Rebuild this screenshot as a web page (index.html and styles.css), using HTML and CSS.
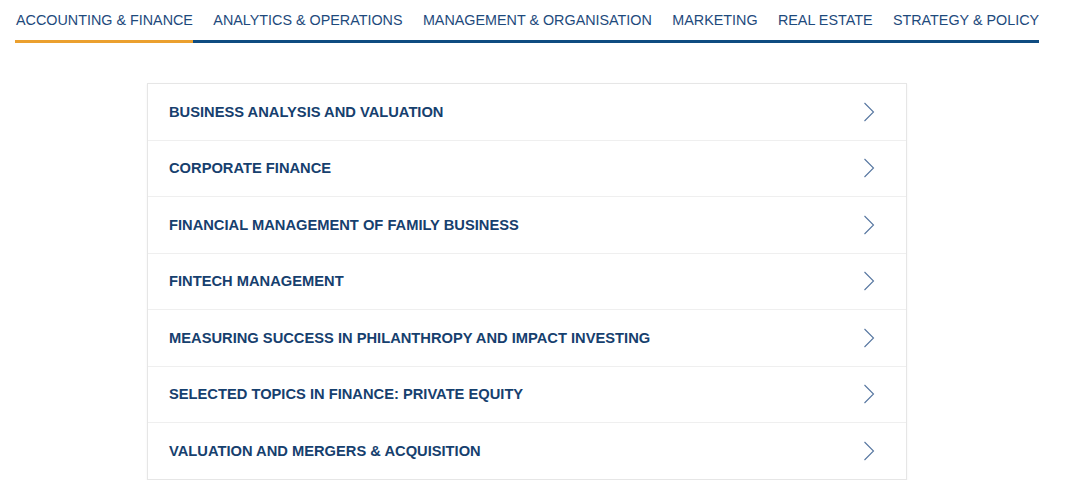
FILE: index.html
```html
<!DOCTYPE html>
<html lang="en">
<head>
<meta charset="utf-8">
<title>Courses</title>
<link rel="stylesheet" href="styles.css">
</head>
<body>
<div class="wrap">
  <nav class="tabs">
    <a class="tab active" href="#">ACCOUNTING &amp; FINANCE</a>
    <a class="tab" href="#">ANALYTICS &amp; OPERATIONS</a>
    <a class="tab" href="#">MANAGEMENT &amp; ORGANISATION</a>
    <a class="tab" href="#">MARKETING</a>
    <a class="tab" href="#">REAL ESTATE</a>
    <a class="tab" href="#">STRATEGY &amp; POLICY</a>
  </nav>
  <ul class="list">
    <li class="row"><span>BUSINESS ANALYSIS AND VALUATION</span><svg class="chev" viewBox="0 0 12 20" width="12" height="20"><polyline points="1.5,1 10.5,10 1.5,19"/></svg></li>
    <li class="row"><span>CORPORATE FINANCE</span><svg class="chev" viewBox="0 0 12 20" width="12" height="20"><polyline points="1.5,1 10.5,10 1.5,19"/></svg></li>
    <li class="row"><span>FINANCIAL MANAGEMENT OF FAMILY BUSINESS</span><svg class="chev" viewBox="0 0 12 20" width="12" height="20"><polyline points="1.5,1 10.5,10 1.5,19"/></svg></li>
    <li class="row"><span>FINTECH MANAGEMENT</span><svg class="chev" viewBox="0 0 12 20" width="12" height="20"><polyline points="1.5,1 10.5,10 1.5,19"/></svg></li>
    <li class="row"><span>MEASURING SUCCESS IN PHILANTHROPY AND IMPACT INVESTING</span><svg class="chev" viewBox="0 0 12 20" width="12" height="20"><polyline points="1.5,1 10.5,10 1.5,19"/></svg></li>
    <li class="row"><span>SELECTED TOPICS IN FINANCE: PRIVATE EQUITY</span><svg class="chev" viewBox="0 0 12 20" width="12" height="20"><polyline points="1.5,1 10.5,10 1.5,19"/></svg></li>
    <li class="row"><span>VALUATION AND MERGERS &amp; ACQUISITION</span><svg class="chev" viewBox="0 0 12 20" width="12" height="20"><polyline points="1.5,1 10.5,10 1.5,19"/></svg></li>
  </ul>
</div>
</body>
</html>
```
FILE: styles.css
```css
* { box-sizing: border-box; }
html, body { margin: 0; padding: 0; background: #fff; }
body { font-family: "Liberation Sans", Arial, sans-serif; }
.wrap { width: 1024px; margin-left: 15px; }
.tabs {
  display: flex;
  gap: 19.4px;
  border-bottom: 3px solid #0f4c81;
  padding-top: 12px;
}
.tab {
  display: block;
  flex: 0 0 auto;
  white-space: nowrap;
  font-size: 14.35px;
  line-height: 16px;
  color: #1e4a7c;
  text-decoration: none;
  padding: 0 0 12px 1px;
  margin-bottom: -3px;
  border-bottom: 3px solid transparent;
}
.tab.active { border-bottom-color: #eba02e; }
.list {
  list-style: none;
  margin: 40px auto 0;
  padding: 0;
  width: 760px;
  border: 1px solid #e6e6e6;
  box-shadow: 0 1px 2px rgba(0,0,0,0.06);
}
.row {
  display: flex;
  align-items: center;
  justify-content: space-between;
  height: 56.5px;
  padding: 0 31px 0 21px;
  border-bottom: 1px solid #efefef;
  font-size: 14.7px;
  font-weight: bold;
  color: #16406e;
  white-space: nowrap;
}
.row:last-child { border-bottom: none; height: 56px; }
.chev { display: block; flex: 0 0 auto; }
.chev polyline { fill: none; stroke: #5676a0; stroke-width: 1.1; }
```
